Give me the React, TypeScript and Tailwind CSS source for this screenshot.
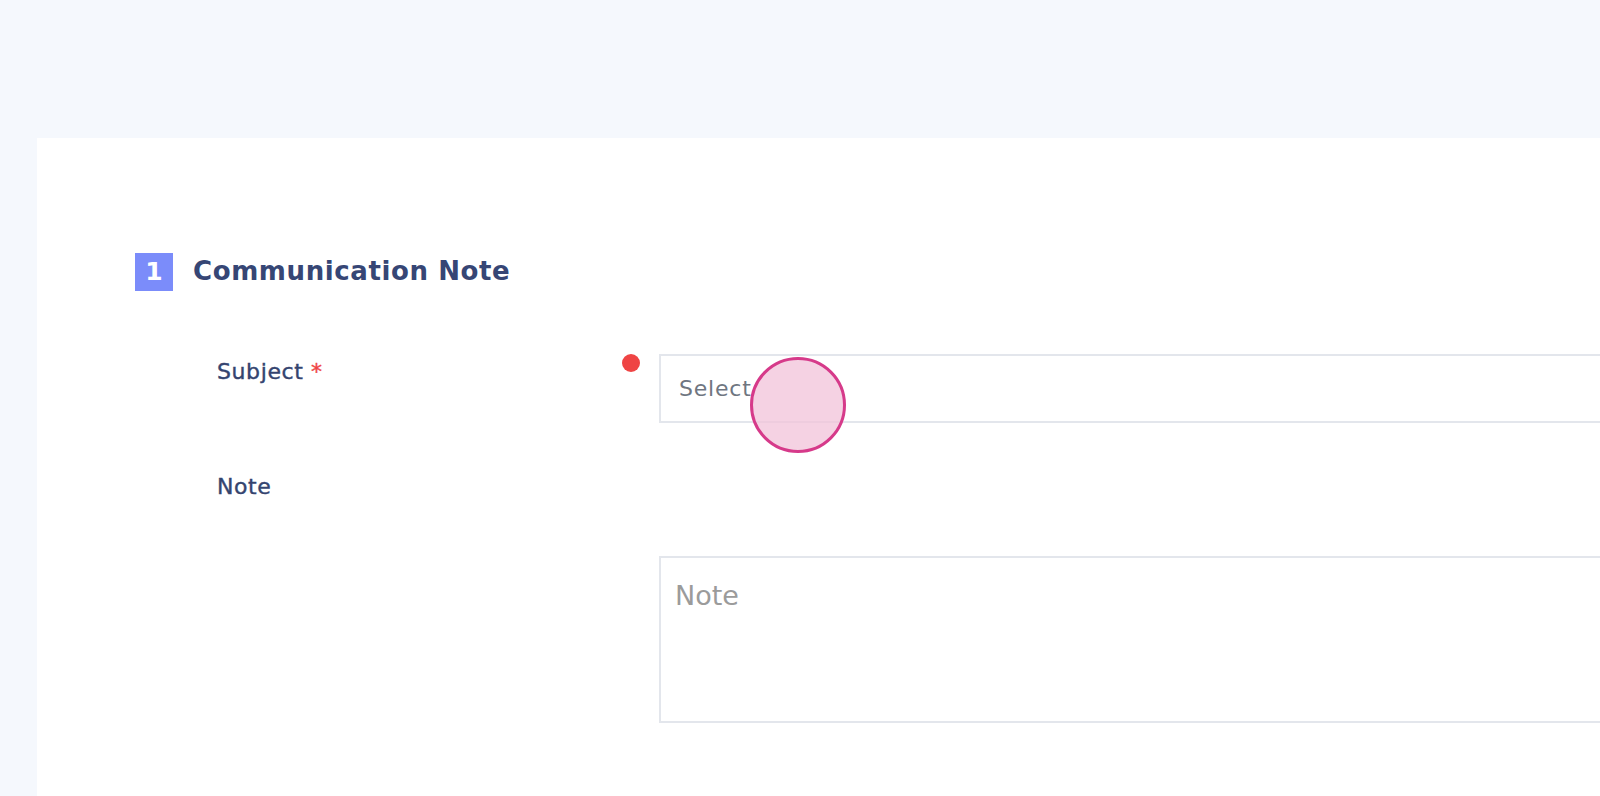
import React from 'react';

const font = { fontFamily: '"DejaVu Sans", "Open Sans", sans-serif' };

export default function App() {
  return (
    <div className="min-h-screen bg-[#f5f8fd] pt-[138px] pl-[37px]" style={font}>
      <div className="relative bg-white min-h-[658px] pl-[98px] pt-[114px]">
        {/* Section header */}
        <div className="flex items-center gap-[20px]">
          <div className="w-[38px] h-[38px] bg-[#7b8cfa] flex items-center justify-center text-white text-[25px] font-bold leading-none">
            1
          </div>
          <h2 className="text-[26px] font-bold text-[#364675] tracking-[0.6px]">Communication Note</h2>
        </div>

        {/* Subject */}
        <div className="flex items-start pl-[82px] mt-[63px]">
          <label className="w-[405px] text-[22px] text-[#34446f] tracking-[0.6px] leading-[28px] pt-[4px] [-webkit-text-stroke:0.4px_#34446f]">
            Subject <span className="text-[#ef4444] [-webkit-text-stroke:0.4px_#ef4444]">*</span>
          </label>
          <span className="w-[18px] h-[18px] rounded-full bg-[#ef4444] shrink-0"></span>
          <div className="flex-1 ml-[19px] h-[69px] border-2 border-[#e3e6ec] border-r-0 flex items-center pl-[18px]">
            <span className="text-[22px] text-[#6f7681] tracking-[0.8px]">Select</span>
          </div>
        </div>

        {/* Note */}
        <div className="pl-[82px] mt-[50px]">
          <label className="text-[22px] text-[#34446f] tracking-[0.6px] leading-[28px] [-webkit-text-stroke:0.4px_#34446f]">Note</label>
        </div>
        <div className="flex pl-[524px] mt-[55px] pb-[70px]">
          <div className="flex-1 h-[167px] border-2 border-[#e3e6ec] border-r-0 pl-[14px] pt-[18px]">
            <span className="text-[27px] text-[#9b9b9b]">Note</span>
          </div>
        </div>

        {/* click indicator */}
        <div className="absolute left-[713px] top-[219px] w-[96px] h-[96px] rounded-full border-[3px] border-[#d63a8a] bg-[#f2c3da]/75"></div>
      </div>
    </div>
  );
}
